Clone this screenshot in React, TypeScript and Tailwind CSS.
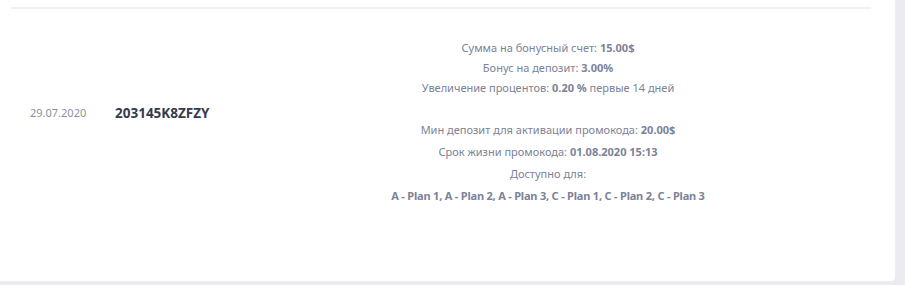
export default function App() {
  const font = { fontFamily: '"Noto Sans", "Open Sans", sans-serif' };
  return (
    <div className="w-[905px] h-[285px] bg-[#ebebf1] overflow-hidden" style={font}>
      <div className="w-[895px] h-[281px] bg-white rounded-br-[4px] pt-[7px]">
        <div className="ml-[11px] w-[860px] h-[2px] bg-[#f1f1f4]" />
        <div className="flex items-center pl-[30px] pt-[10px]">
          <div className="w-[85px] text-[11px] text-[#8b909c]">29.07.2020</div>
          <div className="w-[200px] text-[13.5px] font-bold text-[#353b4c]">203145K8ZFZY</div>
          <div className="w-[466px] pt-[19px] text-center text-[11px] text-[#7c8297]">
            <div className="leading-[20px]">
              Сумма на бонусный счет: <b className="font-bold">15.00$</b>
            </div>
            <div className="leading-[20px]">
              Бонус на депозит: <b className="font-bold">3.00%</b>
            </div>
            <div className="leading-[20px]">
              Увеличение процентов: <b className="font-bold">0.20 %</b> первые 14 дней
            </div>
            <div className="mt-[21px] leading-[22px]">
              Мин депозит для активации промокода: <b className="font-bold">20.00$</b>
            </div>
            <div className="leading-[22px]">
              Срок жизни промокода: <b className="font-bold">01.08.2020 15:13</b>
            </div>
            <div className="leading-[22px]">Доступно для:</div>
            <div className="leading-[22px] font-bold tracking-[-0.2px]">
              A - Plan 1, A - Plan 2, A - Plan 3, C - Plan 1, C - Plan 2, C - Plan 3
            </div>
          </div>
        </div>
      </div>
    </div>
  );
}
